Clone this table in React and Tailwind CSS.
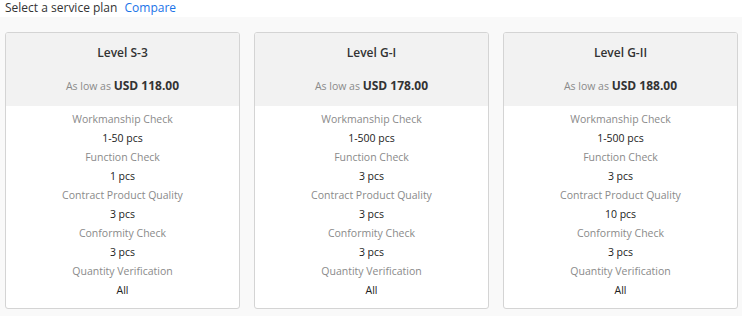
export default function App() {
  const plans = [
    { name: "Level S-3", price: "USD 118.00", vals: ["1-50 pcs", "1 pcs", "3 pcs", "3 pcs", "All"] },
    { name: "Level G-I", price: "USD 178.00", vals: ["1-500 pcs", "3 pcs", "3 pcs", "3 pcs", "All"] },
    { name: "Level G-II", price: "USD 188.00", vals: ["1-500 pcs", "3 pcs", "10 pcs", "3 pcs", "All"] },
  ];
  const labels = ["Workmanship Check", "Function Check", "Contract Product Quality", "Conformity Check", "Quantity Verification"];
  return (
    <div className="w-[742px] h-[316px] overflow-hidden bg-[#f9f9f9]" style={{ fontFamily: '"Open Sans", sans-serif' }}>
      <div className="h-[17px] bg-white overflow-hidden px-[5px]">
        <div className="text-[12px] leading-[16px] text-[#333]">
          Select a service plan <span className="ml-[4px] text-[#1a73e8]">Compare</span>
        </div>
      </div>
      <div className="flex gap-[14px] pl-[5px] pr-[4px] mt-[15px]">
        {plans.map((p) => (
          <div key={p.name} className="w-[235px] h-[277px] border border-[#d4d4d4] rounded-[3px] bg-white overflow-hidden">
            <div className="h-[73px] bg-[#f2f2f2] flex flex-col items-center">
              <div className="mt-[10px] text-[12px] leading-[20px] font-semibold text-[#333]">{p.name}</div>
              <div className="mt-[11px] leading-[20px] text-[#333]">
                <span className="text-[10.5px] text-[#8a8a8a]">As low as </span>
                <span className="text-[12px] font-bold">{p.price}</span>
              </div>
            </div>
            <div className="pt-[4px] flex flex-col items-center">
              {labels.map((l, i) => (
                <div key={l} className="flex flex-col items-center">
                  <div className="text-[10.5px] leading-[19px] text-[#8a8a8a]">{l}</div>
                  <div className="text-[10.5px] leading-[19px] text-[#222]">{p.vals[i]}</div>
                </div>
              ))}
            </div>
          </div>
        ))}
      </div>
    </div>
  );
}
